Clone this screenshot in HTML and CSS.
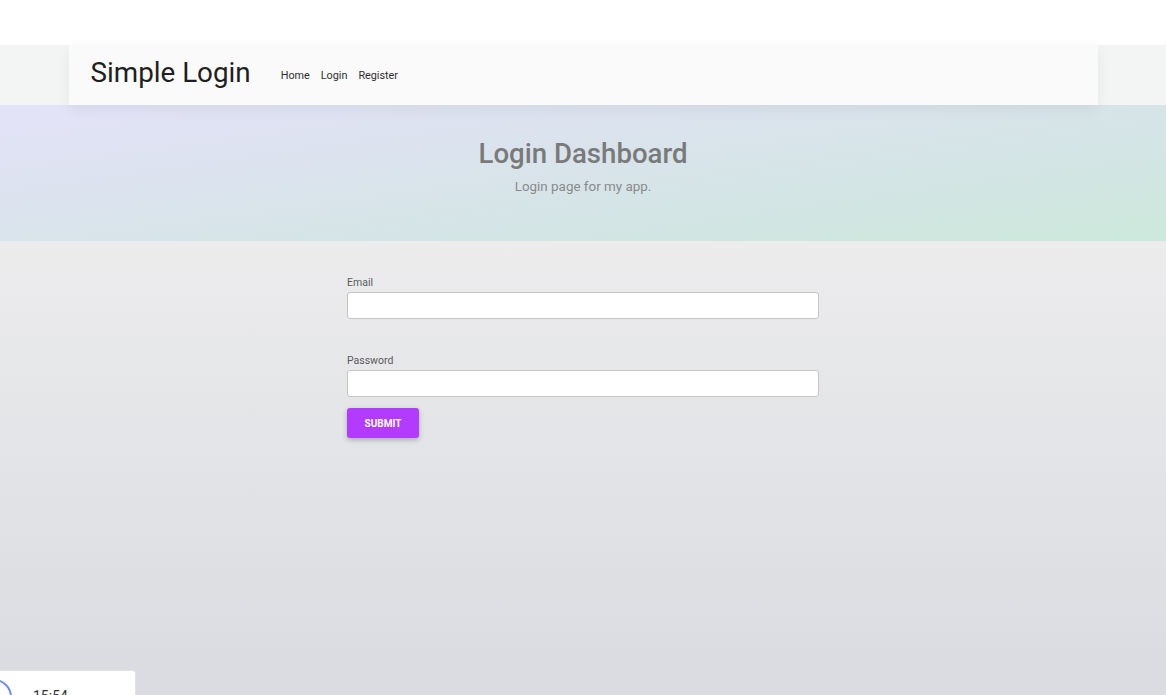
FILE: index.html
```html
<!DOCTYPE html>
<html lang="en">
<head>
<meta charset="utf-8">
<title>Simple Login</title>
<link rel="stylesheet" href="styles.css">
</head>
<body>
<header class="topbar">
  <div class="topbar-inner">
    <h1 class="brand">Simple Login</h1>
    <nav class="nav">
      <a href="#">Home</a>
      <a href="#">Login</a>
      <a href="#">Register</a>
    </nav>
  </div>
</header>
<section class="hero">
  <h2 class="hero-title">Login Dashboard</h2>
  <p class="hero-sub">Login page for my app.</p>
</section>
<main class="main">
  <form class="form">
    <div class="field">
      <label class="label" for="email">Email</label>
      <input class="input" id="email" type="email">
    </div>
    <div class="field field-pw">
      <label class="label" for="pw">Password</label>
      <input class="input" id="pw" type="password">
    </div>
    <button class="submit" type="button">SUBMIT</button>
  </form>
</main>
<div class="clock">
  <svg class="clock-ring" width="40" height="40" viewBox="0 0 40 40"><circle cx="6" cy="26" r="17" fill="none" stroke="#6f8fe6" stroke-width="2"/></svg>
  <span class="clock-time">15:54</span>
</div>
</body>
</html>
```
FILE: styles.css
```css
* { box-sizing: border-box; }
html, body { margin: 0; padding: 0; }
body {
  font-family: Roboto, "Liberation Sans", sans-serif;
  background: #ffffff;
  padding-top: 45px;
  height: 695px;
  overflow: hidden;
}
.topbar {
  background: #f3f4f4;
  height: 60px;
  position: relative;
  z-index: 2;
}
.topbar-inner {
  width: 1029px;
  height: 60px;
  margin: 0 auto;
  background: #fafafa;
  display: flex;
  align-items: center;
  padding-left: 22px;
  box-shadow: 0 4px 14px rgba(0,0,0,0.06);
}
.brand {
  margin: 0;
  font-size: 27.8px;
  font-weight: 400;
  color: #1f1f1f;
  line-height: 1;
  padding-bottom: 4px;
}
.nav {
  display: flex;
  gap: 11px;
  margin-left: 30px;
}
.nav a {
  font-size: 10.8px;
  color: #2e2e2e;
  text-decoration: none;
}
.hero {
  height: 136px;
  background: linear-gradient(172deg, #e4e3f8 0%, #dbe3ee 35%, #d3e5e4 70%, #cce8db 100%);
  text-align: center;
  padding-top: 33px;
}
.hero-title {
  margin: 0;
  font-size: 27.6px;
  font-weight: 500;
  color: #7a7a7a;
  line-height: 32px;
}
.hero-sub {
  margin: 8px 0 0;
  font-size: 13.4px;
  color: #8a8a8a;
  line-height: 18px;
}
.main {
  height: 454px;
  background: linear-gradient(180deg, #ececed 0%, #d9dbe0 100%);
  padding-top: 35px;
}
.form {
  width: 472px;
  margin: 0 auto;
  display: flex;
  flex-direction: column;
}
.field {
  display: flex;
  flex-direction: column;
}
.field-pw { margin-top: 35px; }
.label {
  font-size: 10.5px;
  color: #5a5a5a;
  line-height: 14px;
  margin-bottom: 2px;
}
.input {
  height: 27px;
  border: 1px solid #c6c6c6;
  border-radius: 3px;
  background: #ffffff;
  font-family: inherit;
}
.submit {
  margin-top: 11px;
  width: 72px;
  height: 30px;
  border: none;
  border-radius: 3px;
  background: #b33bff;
  color: #ffffff;
  font-family: inherit;
  font-size: 10px;
  font-weight: 700;
  box-shadow: 0 2px 5px rgba(0,0,0,0.25);
  cursor: pointer;
}
.clock {
  position: fixed;
  left: 0;
  top: 670px;
  width: 136px;
  height: 40px;
  background: #ffffff;
  border: 1px solid #e2e2e2;
  border-left: none;
  border-radius: 0 4px 0 0;
  overflow: hidden;
}
.clock-ring {
  position: absolute;
  left: -12px;
  top: 0;
}
.clock-time {
  position: absolute;
  left: 33px;
  top: 17px;
  font-size: 14px;
  color: #333;
}
```
